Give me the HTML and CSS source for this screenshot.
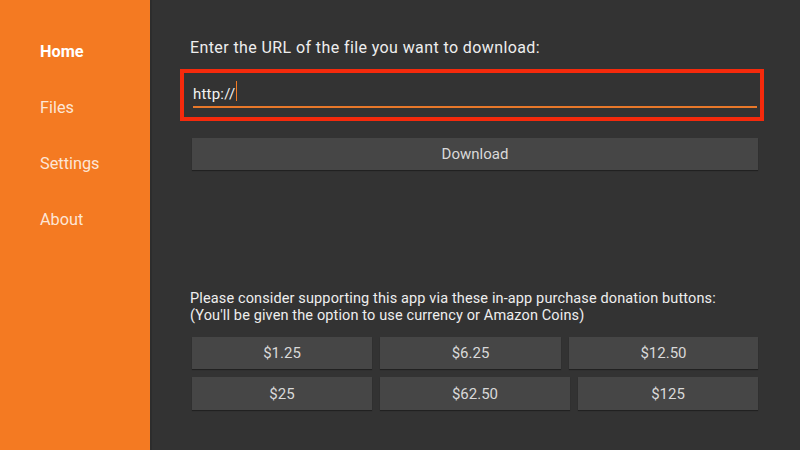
FILE: index.html
```html
<!DOCTYPE html>
<html>
<head>
<meta charset="utf-8">
<link rel="stylesheet" href="styles.css">
</head>
<body>
<div class="app">
  <nav class="sidebar">
    <div class="nav-item active">Home</div>
    <div class="nav-item">Files</div>
    <div class="nav-item">Settings</div>
    <div class="nav-item">About</div>
  </nav>
  <main class="main">
    <div class="prompt">Enter the URL of the file you want to download:</div>
    <div class="focus-box">
      <div class="url-field"><span class="url-text">http://</span><span class="cursor"></span></div>
    </div>
    <div class="btn download">Download</div>
    <div class="donate-text">Please consider supporting this app via these in-app purchase donation buttons:<br>(You'll be given the option to use currency or Amazon Coins)</div>
    <div class="donate-row row1">
      <div class="btn">$1.25</div>
      <div class="btn">$6.25</div>
      <div class="btn">$12.50</div>
    </div>
    <div class="donate-row row2">
      <div class="btn">$25</div>
      <div class="btn">$62.50</div>
      <div class="btn">$125</div>
    </div>
  </main>
</div>
</body>
</html>
```
FILE: styles.css
```css
html, body {
  margin: 0;
  padding: 0;
  width: 800px;
  height: 450px;
  overflow: hidden;
  background: #333333;
  font-family: Roboto, "Liberation Sans", sans-serif;
}
.app {
  display: flex;
  height: 450px;
}
.sidebar {
  width: 152px;
  flex: none;
  background: #f47a22;
  padding-top: 40px;
  box-sizing: border-box;
  display: flex;
  flex-direction: column;
  gap: 33px;
  border-right: 2px solid #2d2d2d;
}
.nav-item {
  padding-left: 40px;
  font-size: 16.3px;
  line-height: 23px;
  color: #fde6d6;
}
.nav-item.active {
  color: #ffffff;
  font-weight: 700;
}
.main {
  flex: 1;
  padding: 38px 40px 0 40px;
  display: flex;
  flex-direction: column;
}
.prompt {
  color: #eeeeee;
  font-size: 16px;
  letter-spacing: 0.4px;
  line-height: 20px;
  margin-left: -2px;
}
.focus-box {
  margin: 11px -4px 0 -12px;
  border: 4px solid #f52a0c;
  height: 44px;
  box-sizing: content-box;
  padding: 0 3px 0 9px;
}
.url-field {
  height: 35px;
  border-bottom: 2px solid #e8782a;
  display: flex;
  align-items: flex-end;
  padding-bottom: 3px;
  box-sizing: border-box;
}
.url-text {
  color: #f2f2f2;
  font-size: 15px;
  letter-spacing: 0.2px;
  line-height: 18px;
}
.cursor {
  display: inline-block;
  width: 1px;
  height: 20px;
  background: #f47a22;
  margin-left: 1px;
  margin-bottom: 2px;
}
.btn {
  background: #464646;
  color: #d9d9d9;
  font-size: 15px;
  height: 32px;
  display: flex;
  align-items: center;
  justify-content: center;
  box-shadow: 0 1px 1px rgba(0,0,0,0.35);
}
.download {
  margin-top: 17px;
  margin-right: 2px;
}
.donate-text {
  margin-top: 120px;
  margin-left: -2px;
  color: #eeeeee;
  font-size: 14.5px;
  letter-spacing: 0.13px;
  line-height: 17px;
}
.donate-row {
  display: grid;
  margin-right: 2px;
}
.row1 {
  margin-top: 13px;
  gap: 8px;
  grid-template-columns: 180px 181px 1fr;
}
.row2 {
  margin-top: 8px;
  grid-template-columns: 180px 190px 1fr;
  gap: 8px;
}
.row2 .btn {
  height: 33px;
}
```
